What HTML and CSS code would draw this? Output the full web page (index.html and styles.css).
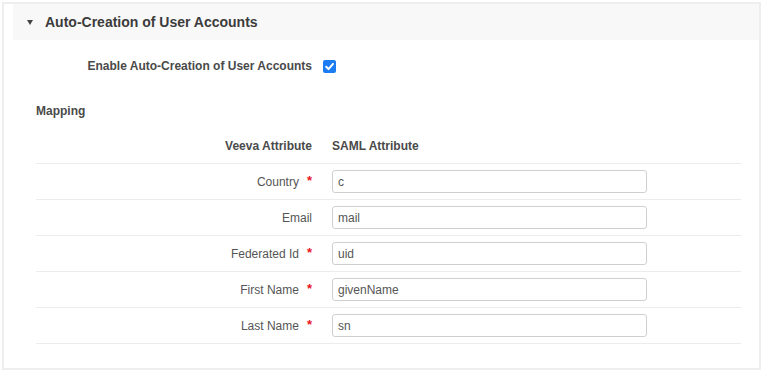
FILE: index.html
```html
<!DOCTYPE html>
<html>
<head>
<meta charset="utf-8">
<link rel="stylesheet" href="styles.css">
</head>
<body>
<div class="panel">
  <div class="section-header">
    <span class="caret"></span>
    <span class="section-title">Auto-Creation of User Accounts</span>
  </div>
  <div class="section-body">
    <div class="enable-row">
      <span class="enable-label">Enable Auto-Creation of User Accounts</span>
      <span class="checkbox"><svg width="13" height="13" viewBox="0 0 13 13"><path d="M3.2 6.8 L5.5 9.1 L10 3.9" fill="none" stroke="#fff" stroke-width="2" stroke-linecap="round" stroke-linejoin="round"/></svg></span>
    </div>
    <div class="mapping-title">Mapping</div>
    <div class="map-table">
      <div class="map-row head">
        <div class="cell-label">Veeva Attribute</div>
        <div class="cell-value">SAML Attribute</div>
      </div>
      <div class="map-row">
        <div class="cell-label">Country<span class="req">*</span></div>
        <div class="cell-value"><input class="text-input" type="text" value="c"></div>
      </div>
      <div class="map-row">
        <div class="cell-label">Email</div>
        <div class="cell-value"><input class="text-input" type="text" value="mail"></div>
      </div>
      <div class="map-row">
        <div class="cell-label">Federated Id<span class="req">*</span></div>
        <div class="cell-value"><input class="text-input" type="text" value="uid"></div>
      </div>
      <div class="map-row">
        <div class="cell-label">First Name<span class="req">*</span></div>
        <div class="cell-value"><input class="text-input" type="text" value="givenName"></div>
      </div>
      <div class="map-row">
        <div class="cell-label">Last Name<span class="req">*</span></div>
        <div class="cell-value"><input class="text-input" type="text" value="sn"></div>
      </div>
    </div>
  </div>
</div>
</body>
</html>
```
FILE: styles.css
```css
* { box-sizing: border-box; }
html, body { margin: 0; padding: 0; background: #fff; }
body {
  font-family: "Liberation Sans", Arial, Helvetica, sans-serif;
  font-size: 12px;
  color: #555;
}
.panel {
  margin: 2px;
  height: 368px;
  border: 2px solid #eeeeee;
  padding-left: 9px;
}
.section-header {
  height: 36px;
  background: #f8f8f8;
  display: flex;
  align-items: center;
  padding-left: 14px;
}
.caret {
  width: 0;
  height: 0;
  border-left: 3.5px solid transparent;
  border-right: 3.5px solid transparent;
  border-top: 5px solid #444;
  margin-right: 12px;
  margin-top: 1px;
}
.section-title {
  font-size: 14px;
  font-weight: bold;
  color: #3c3c3c;
}
.section-body {
  padding-left: 23px;
  padding-right: 18px;
}
.enable-row {
  display: flex;
  align-items: center;
  margin-top: 17px;
  height: 18px;
  line-height: 18px;
}
.enable-label {
  width: 276px;
  text-align: right;
  font-weight: bold;
  color: #4a4a4a;
}
.checkbox {
  width: 13px;
  height: 13px;
  margin-left: 11px;
  border-radius: 2px;
  background: #1c7cf4;
  display: flex;
}
.mapping-title {
  margin-top: 27px;
  line-height: 18px;
  font-weight: bold;
  color: #4a4a4a;
}
.map-table {
  margin-top: 8px;
}
.map-row {
  display: flex;
  align-items: center;
  height: 36px;
  border-bottom: 1px solid #ececec;
}
.map-row.head .cell-label,
.map-row.head .cell-value {
  font-weight: bold;
  color: #4a4a4a;
}
.cell-label {
  width: 296px;
  padding-right: 20px;
  text-align: right;
  color: #555;
}
.req {
  color: #e8141b;
  font-weight: bold;
  font-size: 13px;
  margin-left: 8px;
  position: relative;
  top: -1px;
}
.cell-value {
  flex: 1;
}
.text-input {
  display: block;
  width: 315px;
  height: 23px;
  border: 1px solid #cfcfcf;
  border-radius: 3px;
  padding: 0 5px;
  font-family: "Liberation Sans", Arial, sans-serif;
  font-size: 12px;
  color: #555;
  background: #fff;
  outline: none;
}
```
